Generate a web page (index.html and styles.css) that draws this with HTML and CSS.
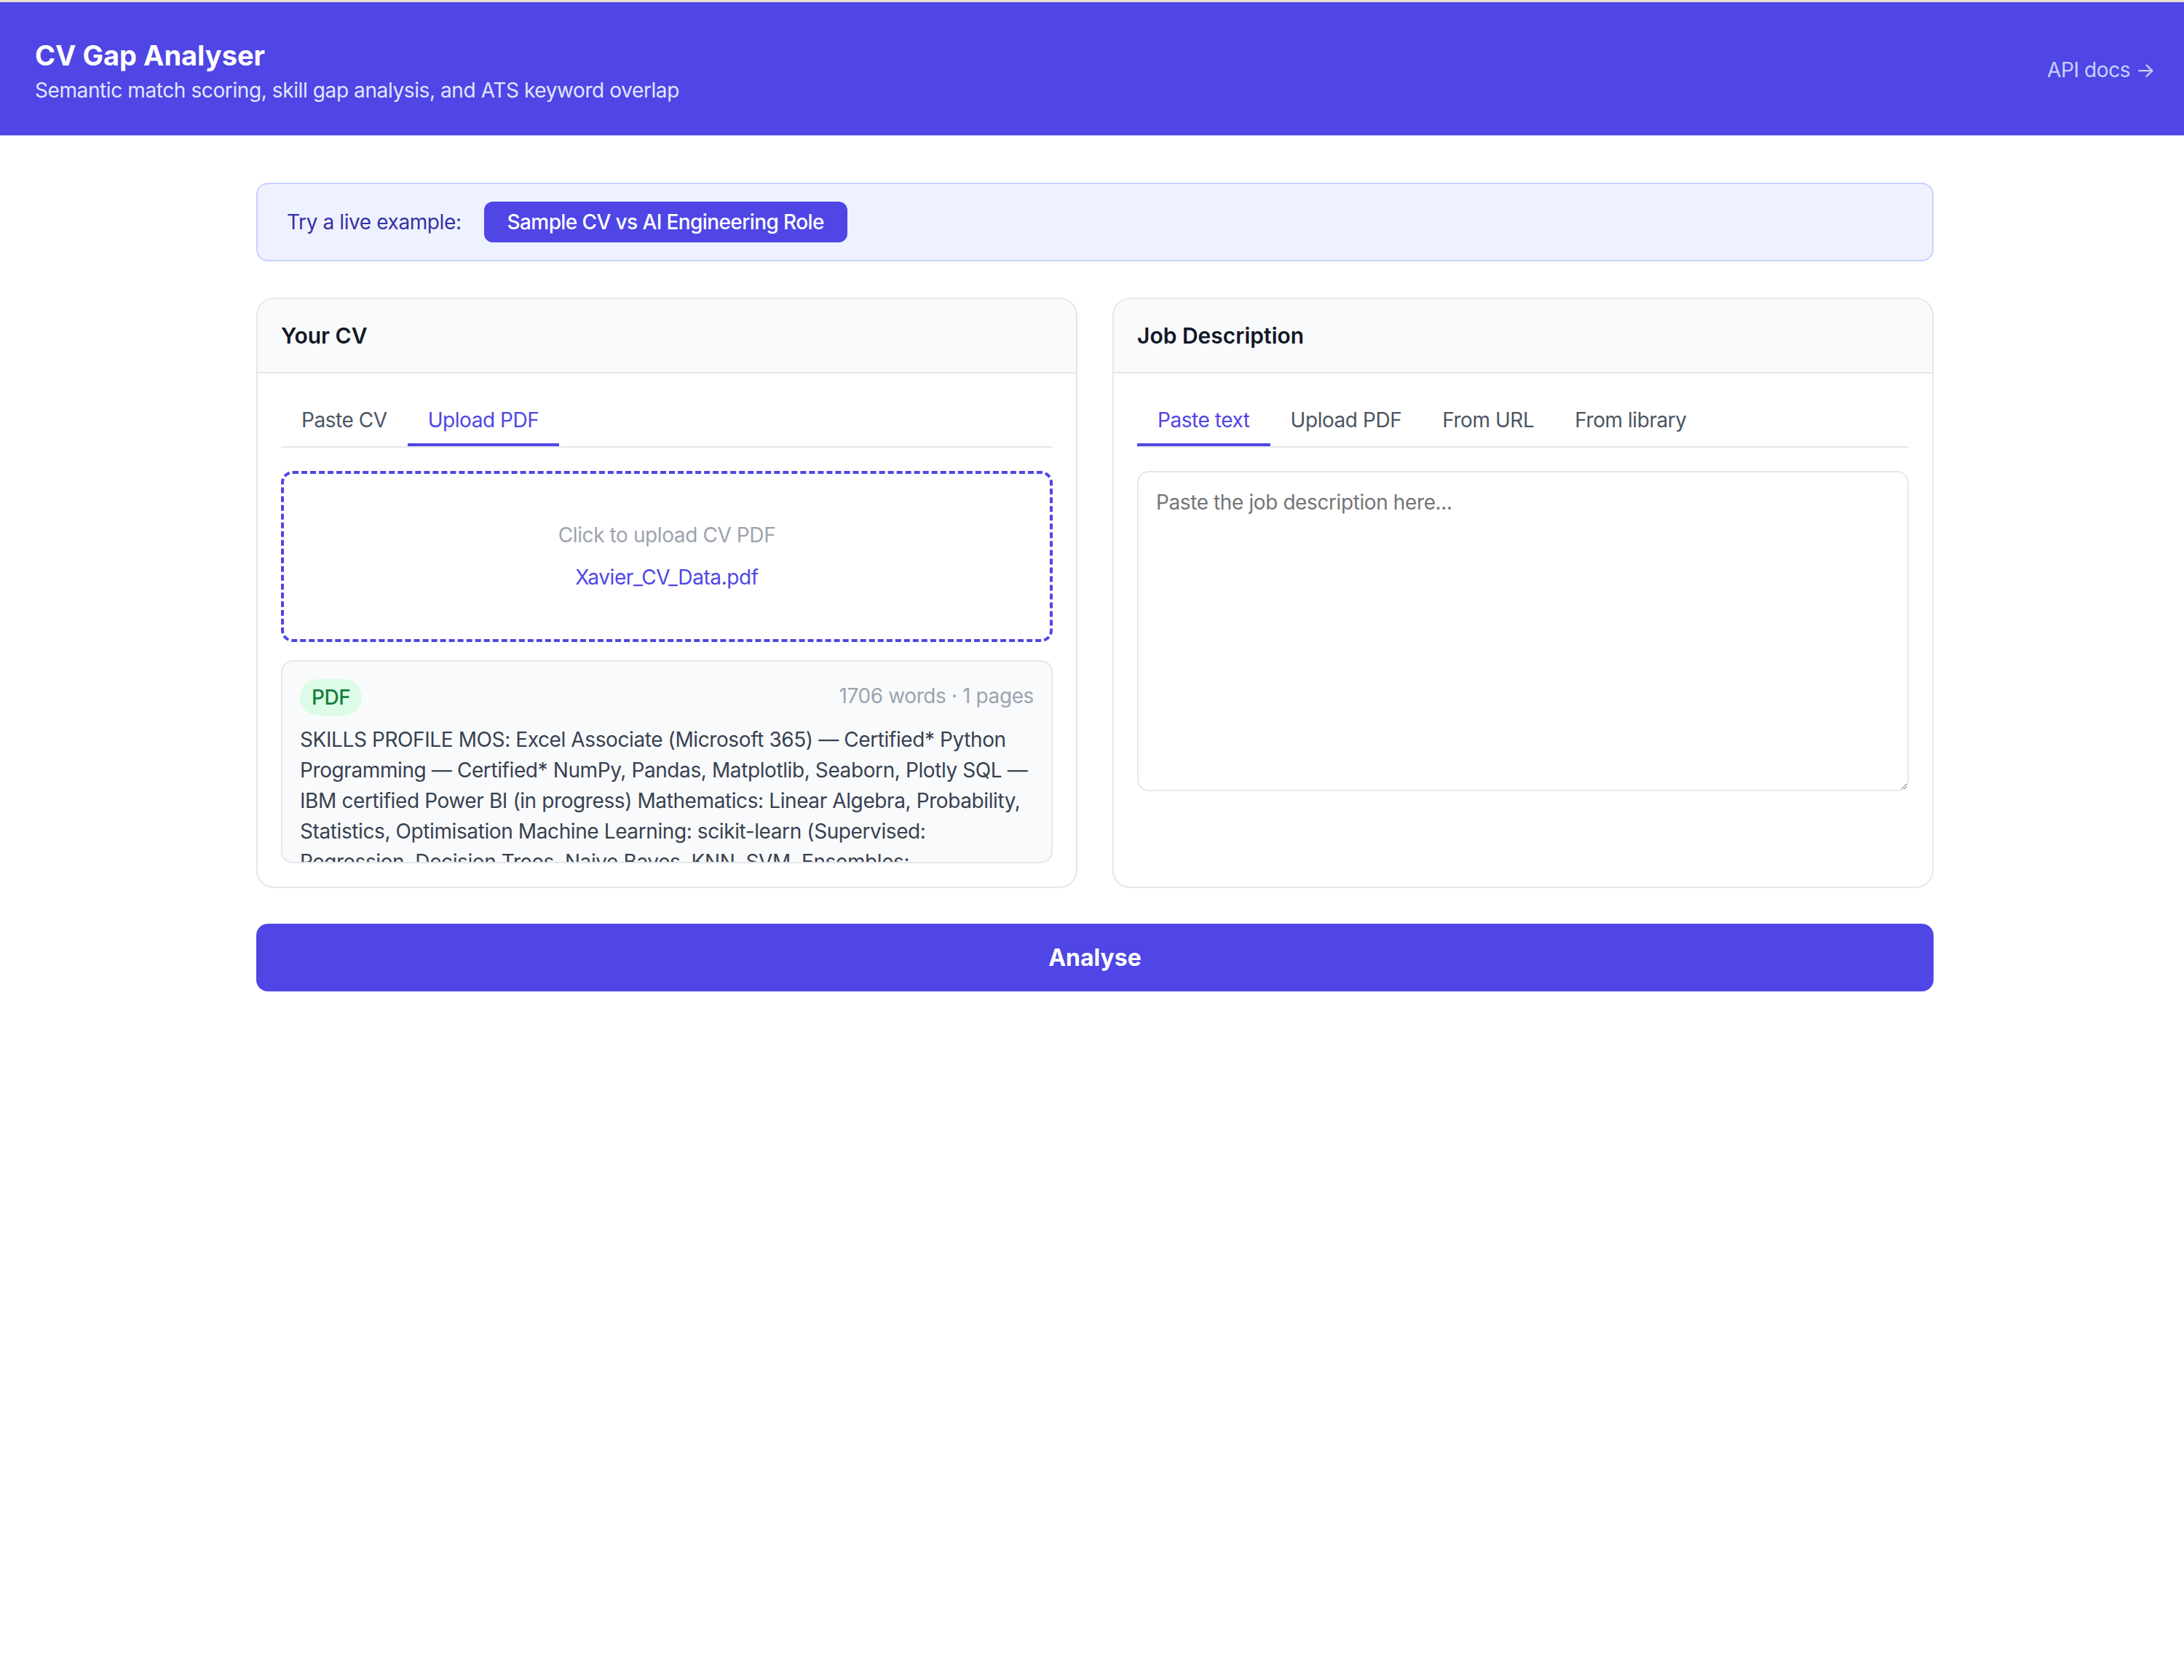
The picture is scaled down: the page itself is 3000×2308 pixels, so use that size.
FILE: index.html
```html
<!DOCTYPE html>
<html lang="en">
  <head>
    <meta charset="UTF-8" />
    <meta name="viewport" content="width=device-width, initial-scale=1.0" />
    <title>CV Gap Analyser</title>
    <link rel="stylesheet" href="styles.css">
  </head>
  <body>
    <header class="topbar">
      <div class="brand">
        <h1>CV Gap Analyser</h1>
        <p>Semantic match scoring, skill gap analysis, and ATS keyword overlap</p>
      </div>
      <a class="api-link" href="#">API docs &rarr;</a>
    </header>

    <main class="container">
      <!-- quick demo -->
      <div class="example-bar">
        <span>Try a live example:</span>
        <button class="example-btn">Sample CV vs AI Engineering Role</button>
      </div>

      <div class="inputs">
        <section class="card">
          <div class="card-head">Your CV</div>
          <div class="card-body">
            <div class="tabs">
              <button class="tab">Paste CV</button>
              <button class="tab active">Upload PDF</button>
            </div>
            <label class="dropzone">
              <span class="drop-hint">Click to upload CV PDF</span>
              <span class="drop-file">Xavier_CV_Data.pdf</span>
            </label>
            <div class="preview">
              <div class="preview-head">
                <span class="badge">PDF</span>
                <span class="preview-meta">1706 words &middot; 1 pages</span>
              </div>
              <p class="preview-text">
                SKILLS PROFILE MOS: Excel Associate (Microsoft 365) — Certified* Python
                Programming — Certified* NumPy, Pandas, Matplotlib, Seaborn, Plotly SQL —
                IBM certified Power BI (in progress) Mathematics: Linear Algebra, Probability,
                Statistics, Optimisation Machine Learning: scikit-learn (Supervised:
                Regression, Decision Trees, Naive Bayes, KNN, SVM, Ensembles:
              </p>
            </div>
          </div>
        </section>

        <section class="card">
          <div class="card-head">Job Description</div>
          <div class="card-body">
            <div class="tabs">
              <button class="tab active">Paste text</button>
              <button class="tab">Upload PDF</button>
              <button class="tab">From URL</button>
              <button class="tab">From library</button>
            </div>
            <textarea class="jd-input" placeholder="Paste the job description here..."></textarea>
          </div>
        </section>
      </div>

      <button class="analyse-btn">Analyse</button>
    </main>
  </body>
</html>
```

FILE: styles.css
```css
* {
  margin: 0;
  padding: 0;
  box-sizing: border-box;
  font-family: Inter, "Noto Sans", sans-serif;
}
html {
  overflow: hidden;
}
body {
  min-width: 3008px;
  background: #ffffff;
  border-top: 3px solid #e9dfcf;
  letter-spacing: -0.4px;
}
button,
textarea {
  letter-spacing: inherit;
}
button {
  border: none;
  background: none;
  cursor: pointer;
}

/* header */
.topbar {
  background: #4f46e5;
  display: flex;
  justify-content: space-between;
  align-items: center;
  padding: 45px 48px 42px;
}
.brand h1 {
  color: #ffffff;
  font-size: 38px;
  line-height: 56px;
  font-weight: 700;
  letter-spacing: 0;
}
.brand p {
  color: #e0e7ff;
  font-size: 28px;
  line-height: 40px;
}
.api-link {
  color: #c7d2fe;
  font-size: 28px;
  line-height: 40px;
  text-decoration: none;
}

.container {
  max-width: 2304px;
  margin: 0 auto;
  padding-top: 65px;
}

/* example banner */
.example-bar {
  display: flex;
  align-items: center;
  gap: 31px;
  background: #eef2ff;
  border: 2px solid #c7d2fe;
  border-radius: 16px;
  padding: 24px 40px;
  font-size: 28px;
  line-height: 40px;
  color: #3730a3;
}
.example-btn {
  background: #4f46e5;
  color: #ffffff;
  font-size: 28px;
  line-height: 40px;
  font-weight: 500;
  padding: 8px 32px;
  border-radius: 12px;
  letter-spacing: -0.6px;
}

/* the two input cards */
.inputs {
  display: grid;
  grid-template-columns: 1fr 1fr;
  gap: 48px;
  margin-top: 50px;
}
.card {
  border: 2px solid #e5e7eb;
  border-radius: 24px;
  overflow: hidden;
  background: #ffffff;
}
.card-head {
  background: #f9fafb;
  border-bottom: 2px solid #e5e7eb;
  padding: 26px 32px;
  font-size: 30px;
  line-height: 48px;
  font-weight: 600;
  color: #111827;
  letter-spacing: 0;
}
.card-body {
  padding: 32px;
}
.tabs {
  display: flex;
  border-bottom: 2px solid #e5e7eb;
}
.tab {
  padding: 12px 28px;
  font-size: 28px;
  line-height: 40px;
  color: #4b5563;
  border-bottom: 4px solid transparent;
  letter-spacing: -0.45px;
}
.tab.active {
  color: #4f46e5;
  border-bottom-color: #4f46e5;
}

.dropzone {
  display: flex;
  flex-direction: column;
  align-items: center;
  gap: 18px;
  margin-top: 32px;
  padding: 64px 0 65px;
  border: 4px dashed #4f46e5;
  border-radius: 16px;
  font-size: 28px;
  line-height: 40px;
  cursor: pointer;
}
.drop-hint {
  color: #9ca3af;
}
.drop-file {
  color: #4f46e5;
}

.preview {
  margin-top: 25px;
  height: 279px;
  overflow: hidden;
  background: #f9fafb;
  border: 2px solid #e5e7eb;
  border-radius: 16px;
  padding: 24px;
}
.preview-head {
  display: flex;
  justify-content: space-between;
  align-items: center;
}
.badge {
  background: #dcfce7;
  color: #15803d;
  font-size: 28px;
  line-height: 40px;
  font-weight: 500;
  padding: 5px 16px;
  border-radius: 9999px;
}
.preview-meta {
  color: #9ca3af;
  font-size: 28px;
  line-height: 40px;
  margin-bottom: 4px;
}
.preview-text {
  margin-top: 12px;
  font-size: 28px;
  line-height: 42px;
  color: #374151;
}

.jd-input {
  display: block;
  width: 100%;
  height: 440px;
  margin-top: 32px;
  padding: 20px 24px;
  border: 2px solid #e5e7eb;
  border-radius: 16px;
  font-size: 28px;
  line-height: 42px;
  color: #111827;
  resize: vertical;
  outline: none;
}
.jd-input::placeholder {
  color: #757575;
}

.analyse-btn {
  display: block;
  width: 100%;
  margin-top: 49px;
  background: #4f46e5;
  color: #ffffff;
  font-size: 32px;
  line-height: 45px;
  font-weight: 700;
  padding: 24px;
  border-radius: 16px;
  letter-spacing: 0;
}
```
